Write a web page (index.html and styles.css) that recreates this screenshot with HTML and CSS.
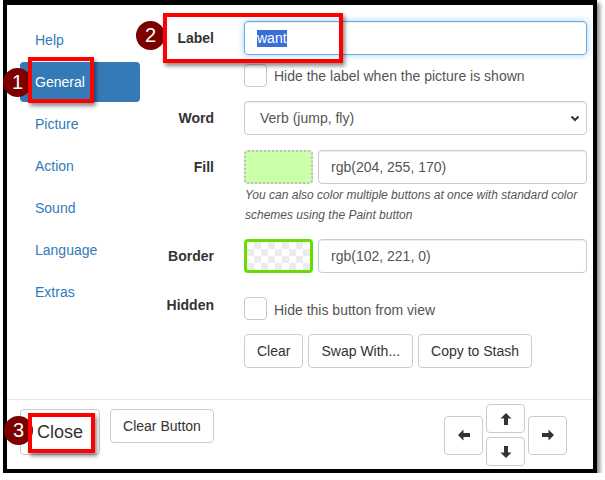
FILE: index.html
```html
<!DOCTYPE html>
<html>
<head>
<meta charset="utf-8">
<title>Button editor</title>
<link rel="stylesheet" href="styles.css">
</head>
<body>
<div class="frame">
  <div class="main">
    <ul class="nav">
      <li><a>Help</a></li>
      <li class="active"><a>General</a></li>
      <li><a>Picture</a></li>
      <li><a>Action</a></li>
      <li><a>Sound</a></li>
      <li><a>Language</a></li>
      <li><a>Extras</a></li>
    </ul>
    <div class="form">
      <div class="row r-label">
        <span class="lbl">Label</span>
        <div class="field"><div class="input focus"><span class="sel">want</span></div></div>
      </div>
      <div class="row r-check">
        <span class="lbl"></span>
        <div class="field"><span class="check"></span><span class="check-text">Hide the label when the picture is shown</span></div>
      </div>
      <div class="row r-word">
        <span class="lbl">Word</span>
        <div class="field">
          <div class="input select">Verb (jump, fly)
            <svg class="chev" width="10" height="7" viewBox="0 0 10 7"><polyline points="1.5,1.5 5,5 8.5,1.5" fill="none" stroke="#333" stroke-width="2"/></svg>
          </div>
        </div>
      </div>
      <div class="row r-fill">
        <span class="lbl">Fill</span>
        <div class="field"><span class="swatch fill-swatch"></span><div class="input">rgb(204, 255, 170)</div></div>
      </div>
      <p class="help">You can also color multiple buttons at once with standard color schemes using the Paint button</p>
      <div class="row r-border">
        <span class="lbl">Border</span>
        <div class="field"><span class="swatch border-swatch"></span><div class="input">rgb(102, 221, 0)</div></div>
      </div>
      <div class="row r-hidden">
        <span class="lbl">Hidden</span>
        <div class="field"><span class="check"></span><span class="check-text">Hide this button from view</span></div>
      </div>
      <div class="row r-btns">
        <span class="lbl"></span>
        <div class="field btns">
          <span class="btn">Clear</span>
          <span class="btn">Swap With...</span>
          <span class="btn">Copy to Stash</span>
        </div>
      </div>
    </div>
  </div>
  <div class="footer">
    <div class="foot-left">
      <span class="btn btn-lg">Close</span>
      <span class="btn">Clear Button</span>
    </div>
    <div class="arrows">
      <span class="btn arrow side"><svg width="12" height="12" viewBox="0 0 12 12" class="rot180"><path d="M12 6 L6.5 0.5 V4 H0 V8 H6.5 V11.5 Z" fill="#333"/></svg></span>
      <div class="mid">
        <span class="btn arrow ud"><svg width="12" height="12" viewBox="0 0 12 12" class="rot270"><path d="M12 6 L6.5 0.5 V4 H0 V8 H6.5 V11.5 Z" fill="#333"/></svg></span>
        <span class="btn arrow ud"><svg width="12" height="12" viewBox="0 0 12 12" class="rot90"><path d="M12 6 L6.5 0.5 V4 H0 V8 H6.5 V11.5 Z" fill="#333"/></svg></span>
      </div>
      <span class="btn arrow side"><svg width="12" height="12" viewBox="0 0 12 12"><path d="M12 6 L6.5 0.5 V4 H0 V8 H6.5 V11.5 Z" fill="#333"/></svg></span>
    </div>
  </div>
</div>

<span class="badge b1">1</span>
<span class="redbox rb1"></span>
<span class="badge b2">2</span>
<span class="redbox rb2"></span>
<span class="badge b3">3</span>
<span class="redbox rb3"></span>
</body>
</html>
```

FILE: styles.css
```css
html, body {
  margin: 0;
  padding: 0;
  background: #fff;
}
body {
  font-family: "Liberation Sans", Arial, sans-serif;
  font-size: 14px;
  color: #333;
}
.frame {
  margin-left: 3px;
  width: 594px;
  height: 473px;
  box-sizing: border-box;
  border: 4px solid #000;
  border-top-width: 5px;
  box-shadow: 3px 3px 4px rgba(0, 0, 0, 0.45);
  display: flex;
  flex-direction: column;
}
.main {
  height: 394px;
  border-bottom: 1px solid #e5e5e5;
  display: flex;
}
.nav {
  list-style: none;
  margin: 0;
  padding: 15px 0 0 13px;
  width: 120px;
  flex: none;
}
.nav li + li { margin-top: 2px; }
.nav a {
  display: block;
  padding: 10px 15px;
  line-height: 20px;
  border-radius: 4px;
  color: #337ab7;
}
.nav .active a {
  background: #337ab7;
  color: #fff;
}
.form {
  flex: 1;
  padding: 16px 6px 0 0;
}
.row {
  display: flex;
  align-items: center;
}
.lbl {
  width: 74px;
  margin-right: 30px;
  text-align: right;
  font-weight: bold;
  line-height: 20px;
  flex: none;
}
.field {
  flex: 1;
  display: flex;
  align-items: center;
}
.input {
  flex: 1;
  height: 34px;
  box-sizing: border-box;
  border: 1px solid #ccc;
  border-radius: 4px;
  padding: 0 12px;
  line-height: 32px;
  color: #555;
  box-shadow: inset 0 1px 1px rgba(0, 0, 0, 0.075);
  position: relative;
}
.input.focus {
  border-color: #66afe9;
  box-shadow: inset 0 1px 1px rgba(0, 0, 0, 0.075), 0 0 6px rgba(102, 175, 233, 0.6);
}
.sel {
  background: #3a6fd6;
  color: #fff;
  line-height: 17px;
  display: inline-block;
}
.select { padding-left: 15px; }
.chev {
  position: absolute;
  right: 6px;
  top: 13px;
}
.r-check { margin-top: 9px; }
.check {
  width: 23px;
  height: 23px;
  box-sizing: border-box;
  border: 1px solid #c8c8c8;
  border-radius: 4px;
  flex: none;
}
.check-text {
  margin-left: 7px;
  color: #555;
  line-height: 20px;
}
.r-word { margin-top: 14px; }
.r-fill { margin-top: 15px; }
.swatch {
  width: 69px;
  height: 34px;
  box-sizing: border-box;
  border-radius: 4px;
  margin-right: 5px;
  flex: none;
}
.fill-swatch {
  background: rgb(204, 255, 170);
  border: 2px dotted #bdbdbd;
}
.border-swatch {
  border: 3px solid rgb(102, 221, 0);
  background: repeating-conic-gradient(#ececec 0 25%, #fff 0 50%) 0 0 / 14px 14px;
}
.help {
  margin: 1px 0 0 105px;
  font-size: 12px;
  font-style: italic;
  line-height: 20px;
  color: #555;
}
.r-border { margin-top: 14px; }
.r-hidden {
  margin-top: 24px;
  align-items: flex-start;
}
.r-hidden .lbl { margin-top: -2px; }
.r-hidden .check-text { margin-top: 3px; }
.r-btns { margin-top: 14px; }
.btns { gap: 5px; }
.btn {
  display: inline-flex;
  align-items: center;
  justify-content: center;
  height: 34px;
  box-sizing: border-box;
  padding: 0 12px;
  border: 1px solid #ccc;
  border-radius: 4px;
  color: #333;
  background: #fff;
  white-space: nowrap;
}
.footer {
  flex: 1;
  display: flex;
  justify-content: space-between;
  padding: 0 26px 0 13px;
}
.foot-left {
  padding-top: 9px;
  display: flex;
  align-items: flex-start;
  gap: 10px;
}
.btn-lg {
  height: 46px;
  padding: 0 16px;
  font-size: 18px;
}
.arrows {
  padding-top: 4px;
  display: flex;
  align-items: center;
  gap: 3px;
  height: 62px;
}
.mid {
  display: flex;
  flex-direction: column;
  gap: 4px;
}
.arrow { padding: 0; width: 39px; }
.side { height: 39px; }
.ud { height: 29px; }
.rot180 { transform: rotate(180deg); }
.rot270 { transform: rotate(270deg); }
.rot90 { transform: rotate(90deg); }

.badge {
  position: absolute;
  width: 29px;
  height: 29px;
  border-radius: 50%;
  background: #7d0000;
  color: #fff;
  font-size: 20px;
  line-height: 29px;
  text-align: center;
}
.b1 { left: 3px; top: 68px; }
.b2 { left: 136px; top: 21px; }
.b3 { left: 4px; top: 416px; }
.redbox {
  position: absolute;
  box-sizing: border-box;
  border: 4px solid #ff0000;
  box-shadow: 2px 3px 4px rgba(0, 0, 0, 0.45);
}
.rb1 { left: 28px; top: 57px; width: 66px; height: 46px; }
.rb2 { left: 163px; top: 13px; width: 180px; height: 50px; }
.rb3 { left: 28px; top: 413px; width: 67px; height: 40px; }
```
